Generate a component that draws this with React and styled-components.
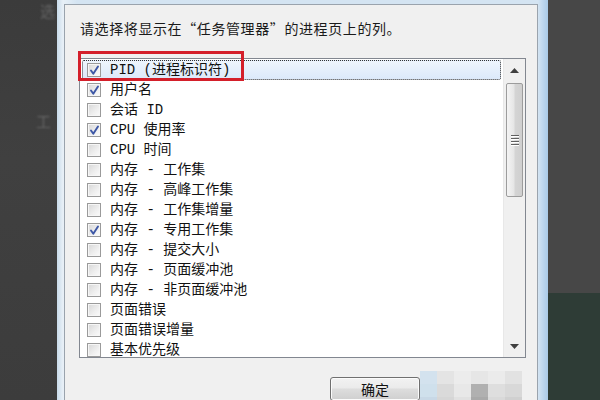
import React from "react";
import styled, { createGlobalStyle } from "styled-components";

const Global = createGlobalStyle`
  html, body { margin: 0; padding: 0; background: #3e3e3e; overflow: hidden; }
  #root { width: 600px; height: 400px; }
`;

const Screen = styled.div`
  width: 600px;
  height: 400px;
  display: flex;
  overflow: hidden;
  font-family: "Liberation Mono", "Noto Sans CJK SC", monospace;
`;

const LeftBg = styled.div`
  width: 57px;
  flex: none;
  background: linear-gradient(180deg, #3b3b3b 0%, #404040 40%, #3c3c3c 100%);
  display: flex;
  flex-direction: column;
  align-items: flex-end;
  overflow: hidden;
`;

const Ghost = styled.span`
  font-family: "Noto Sans CJK SC", sans-serif;
  font-size: 15px;
  color: #666;
  filter: blur(0.8px);
  margin-top: ${(p) => p.$top}px;
  margin-right: ${(p) => p.$right}px;
  line-height: 18px;
`;

const Window = styled.div`
  flex: 1;
  display: flex;
  padding: 4px 10px 0 7px;
  background: linear-gradient(90deg, #c9dbea 0px, #e8f0f7 6px, #d4e4f2 20px, #d4e4f2 calc(100% - 10px), #c1d9ef calc(100% - 6px), #a9c9e6 100%);
`;

const Client = styled.div`
  flex: 1;
  background: #f0f0f0;
  border: 1px solid #9aa3ad;
  border-bottom: none;
  display: flex;
  flex-direction: column;
  padding: 13px 0 0 14px;
`;

const Prompt = styled.div`
  font-family: "Noto Sans CJK SC", sans-serif;
  font-size: 14px;
  letter-spacing: 0.6px;
  line-height: 20px;
  color: #1a1a1a;
  padding-left: 1px;
`;

const ListBox = styled.div`
  position: relative;
  margin-top: 20px;
  width: 447px;
  height: 300px;
  box-sizing: border-box;
  border: 1px solid #828790;
  background: #fff;
  display: flex;
`;

const Items = styled.div`
  flex: 1;
  padding: 1px 2px 0 2px;
  overflow: hidden;
  display: flex;
  flex-direction: column;
`;

const Row = styled.div`
  height: 20px;
  flex: none;
  box-sizing: border-box;
  display: flex;
  align-items: center;
  gap: 9px;
  padding-left: 4px;
  font-size: 14px;
  color: #111;
  border: 1px dotted ${(p) => (p.$focused ? "#333" : "transparent")};
  background: ${(p) =>
    p.$focused ? "linear-gradient(180deg, #eef5fd 0%, #dce9fa 100%)" : "transparent"};
  border-radius: 2px;
`;

const Box = styled.span`
  width: 14px;
  height: 14px;
  flex: none;
  box-sizing: border-box;
  border: 1px solid #9a9a9a;
  background: linear-gradient(135deg, #d6d6d6 0%, #efefef 60%, #fbfbfb 100%);
  box-shadow: inset 0 0 0 1px #f6f6f6;
  display: flex;
  align-items: center;
  justify-content: center;
`;

const Label = styled.span`
  white-space: pre;
  line-height: 18px;
`;

const ScrollBar = styled.div`
  width: 21px;
  flex: none;
  background: #f0f0f0;
  border-left: 1px solid #e8e8e8;
  display: flex;
  flex-direction: column;
  align-items: center;
`;

const ArrowBtn = styled.div`
  height: 22px;
  width: 100%;
  flex: none;
  display: flex;
  align-items: center;
  justify-content: center;
`;

const Track = styled.div`
  flex: 1;
  width: 100%;
  display: flex;
  flex-direction: column;
  align-items: center;
  padding-top: 2px;
`;

const Thumb = styled.div`
  width: 17px;
  height: 114px;
  box-sizing: border-box;
  border: 1px solid #9c9c9c;
  border-radius: 2px;
  background: linear-gradient(90deg, #f4f4f4 0%, #e6e6e6 45%, #d4d4d4 55%, #cfcfcf 100%);
  display: flex;
  flex-direction: column;
  align-items: center;
  justify-content: center;
  gap: 2px;
`;

const Grip = styled.span`
  width: 8px;
  height: 1px;
  background: #606060;
  box-shadow: 0 1px 0 #fff;
`;

const Highlight = styled.div`
  position: absolute;
  left: -2px;
  top: -8px;
  width: 166px;
  height: 30px;
  box-sizing: border-box;
  border: 3px solid #d41f2a;
  pointer-events: none;
`;

const Footer = styled.div`
  display: flex;
  margin-top: 19px;
  margin-left: 251px;
`;

const OkButton = styled.div`
  width: 90px;
  height: 24px;
  box-sizing: border-box;
  border: 1px solid #707070;
  border-radius: 3px;
  background: linear-gradient(180deg, #f2f2f2 0%, #ebebeb 45%, #dddddd 50%, #cfcfcf 100%);
  box-shadow: inset 0 0 0 1px #fbfbfb;
  display: flex;
  align-items: center;
  justify-content: center;
  font-family: "Noto Sans CJK SC", sans-serif;
  font-size: 14px;
  color: #111;
`;

const Mosaic = styled.div`
  display: grid;
  grid-template-columns: repeat(6, 17px);
  grid-auto-rows: 13px;
  margin-top: -6px;
`;

const Tile = styled.span`
  background: ${(p) => p.$c};
`;

const RightBg = styled.div`
  width: 52px;
  flex: none;
  display: flex;
  flex-direction: column;
`;

const RightTop = styled.div`
  height: 293px;
  background: #474747;
`;

const RightBottom = styled.div`
  flex: 1;
  background: #2e3c36;
`;

const Check = () => (
  <svg width="11" height="11" viewBox="0 0 11 11">
    <path d="M2 5.5 L4.3 8.8 L9 1.5" fill="none" stroke="#3d57a6" strokeWidth="1.9" strokeLinecap="round" strokeLinejoin="round" />
  </svg>
);

const Arrow = ({ down }) => (
  <svg width="9" height="5" viewBox="0 0 9 5">
    <path d={down ? "M0 0 H9 L4.5 5 Z" : "M0 5 H9 L4.5 0 Z"} fill="#404040" />
  </svg>
);

const rows = [
  ["PID (进程标识符)", true],
  ["用户名", true],
  ["会话 ID", false],
  ["CPU 使用率", true],
  ["CPU 时间", false],
  ["内存 - 工作集", false],
  ["内存 - 高峰工作集", false],
  ["内存 - 工作集增量", false],
  ["内存 - 专用工作集", true],
  ["内存 - 提交大小", false],
  ["内存 - 页面缓冲池", false],
  ["内存 - 非页面缓冲池", false],
  ["页面错误", false],
  ["页面错误增量", false],
  ["基本优先级", false],
];

const tiles = [
  "#d3e2ee", "#e4e4e4", "#ececec", "#e6e6e6", "#ebebeb", "#e2e2e2",
  "#cfe0ec", "#dadada", "#e8e8e8", "#b0b0b0", "#dedede", "#d8d8d8",
  "#c8d8e6", "#d6d6d6", "#e1e1e1", "#a9a9a9", "#d9d9d9", "#d0d0d0",
];

export default function App() {
  return (
    <>
      <Global />
      <Screen>
        <LeftBg>
          <Ghost $top={2} $right={2}>选</Ghost>
          <Ghost $top={92} $right={6}>工</Ghost>
        </LeftBg>
        <Window>
          <Client>
            <Prompt>请选择将显示在“任务管理器”的进程页上的列。</Prompt>
            <ListBox>
              <Items>
                {rows.map(([label, checked], i) => (
                  <Row key={label} $focused={i === 0}>
                    <Box>{checked && <Check />}</Box>
                    <Label>{label}</Label>
                  </Row>
                ))}
              </Items>
              <ScrollBar>
                <ArrowBtn><Arrow /></ArrowBtn>
                <Track>
                  <Thumb>
                    <Grip />
                    <Grip />
                    <Grip />
                    <Grip />
                  </Thumb>
                </Track>
                <ArrowBtn><Arrow down /></ArrowBtn>
              </ScrollBar>
              <Highlight />
            </ListBox>
            <Footer>
              <OkButton>确定</OkButton>
              <Mosaic>
                {tiles.map((c, i) => (
                  <Tile key={i} $c={c} />
                ))}
              </Mosaic>
            </Footer>
          </Client>
        </Window>
        <RightBg>
          <RightTop />
          <RightBottom />
        </RightBg>
      </Screen>
    </>
  );
}
